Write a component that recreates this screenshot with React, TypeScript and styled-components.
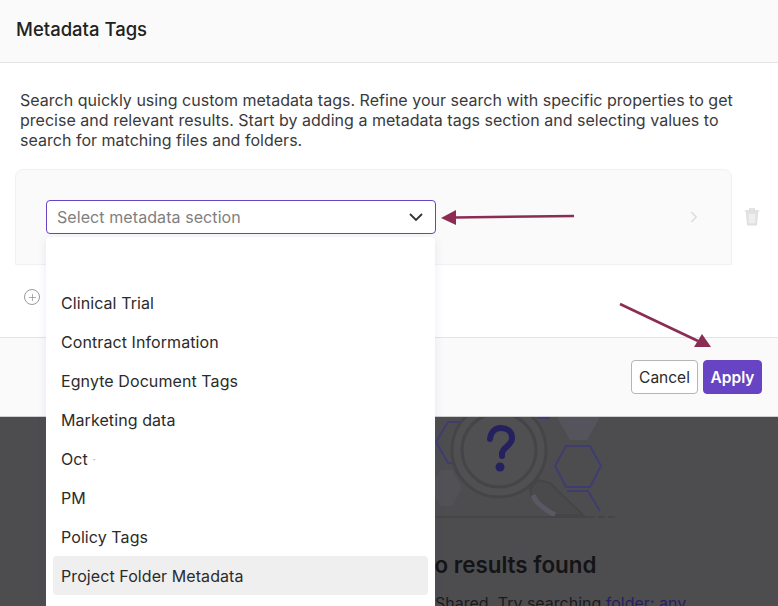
import styled, { createGlobalStyle } from "styled-components";
import { ChevronRight, Plus } from "lucide-react";

const GlobalStyle = createGlobalStyle`
  html, body {
    margin : 0;
    padding : 0;
    background : #4d4d4f;
  }
  * {
    box-sizing : border-box;
  }
`;

const Page = styled.div`
  position : relative;
  width : 778px;
  height : 606px;
  overflow : hidden;
  display : flex;
  flex-direction : column;
  font-family : Inter, "Liberation Sans", sans-serif;
  color : #2b2b2b;
`;

const Header = styled.header`
  height : 63px;
  flex : none;
  display : flex;
  align-items : center;
  padding : 0 16px 5px;
  background : #fafafa;
  border-bottom : 1px solid #e3e3e3;
`;

const Title = styled.h1`
  margin : 0;
  font-size : 18.5px;
  font-weight : 500;
  color : #222;
`;

const Body = styled.section`
  height : 274px;
  flex : none;
  background : #fff;
  padding : 27px 15px 0;
`;

const Intro = styled.p`
  margin : 0 0 19px 5px;
  font-size : 16px;
  line-height : 20px;
  letter-spacing : 0.02px;
  color : #3a3a3a;
`;

const SectionRow = styled.div`
  display : flex;
  align-items : center;
`;

const SectionCard = styled.div`
  width : 717px;
  height : 96px;
  display : flex;
  align-items : center;
  justify-content : space-between;
  padding : 0 28px 0 30px;
  background : #fafafa;
  border : 1px solid #f1f1f1;
  border-radius : 8px 8px 0 0;
`;

const Select = styled.div`
  width : 390px;
  height : 34px;
  display : flex;
  align-items : center;
  justify-content : space-between;
  padding : 0 12px 0 10px;
  background : #fff;
  border : 1.5px solid #6744c4;
  border-radius : 4px;
  font-size : 16px;
  letter-spacing : 0.08px;
  color : #808080;
`;

const DeleteButton = styled.span`
  display : flex;
  margin-left : 13px;
`;

const AddRow = styled.div`
  display : flex;
  margin : 24px 0 0 9px;
`;

const AddIcon = styled.span`
  width : 16px;
  height : 16px;
  display : flex;
  align-items : center;
  justify-content : center;
  border : 1px solid #9a9a9a;
  border-radius : 50%;
  color : #8a8a8a;
`;

const Footer = styled.footer`
  height : 80px;
  flex : none;
  display : flex;
  align-items : center;
  justify-content : flex-end;
  gap : 5px;
  padding : 0 16px 0 0;
  background : #fafafa;
  border-top : 1px solid #e3e3e3;
  border-bottom : 1px solid #cfcfcf;
`;

const Button = styled.button<{ $primary?: boolean }>`
  height : 34px;
  padding : 0;
  width : ${props => (props.$primary ? "59px" : "67px")};
  font-family : inherit;
  font-size : 15.5px;
  font-weight : ${props => (props.$primary ? 600 : 400)};
  color : ${props => (props.$primary ? "#fff" : "#2b2b2b")};
  background : ${props => (props.$primary ? "#6744c4" : "#fff")};
  border : 1px solid ${props => (props.$primary ? "#6744c4" : "#b5b5b5")};
  border-radius : 4px;
`;

const Backdrop = styled.div`
  flex : 1;
  background : #4d4d4f;
  display : flex;
  flex-direction : column;
  align-items : flex-start;
  padding-left : 400px;
  overflow : hidden;
`;

const Illustration = styled.svg`
  flex : none;
  display : block;
`;

const EmptyTitle = styled.div`
  width : 214px;
  margin-top : 33px;
  text-align : center;
  font-size : 22.4px;
  font-weight : 600;
  white-space : nowrap;
  color : #141416;
`;

const EmptyText = styled.div`
  margin : 15px 0 0 35px;
  font-size : 16px;
  white-space : nowrap;
  color : #1b1b1d;
`;

const EmptyLink = styled.span`
  color : #25215e;
`;

const Dropdown = styled.ul`
  position : absolute;
  left : 46px;
  top : 237px;
  width : 389px;
  height : 380px;
  margin : 0;
  padding : 8px 7px;
  list-style : none;
  background : #fff;
  border-radius : 4px;
  box-shadow : 0 2px 10px rgba(90, 70, 170, 0.12);
`;

const Option = styled.li<{ $active?: boolean }>`
  height : 38.9px;
  display : flex;
  align-items : center;
  padding-left : 8px;
  font-size : 16px;
  letter-spacing : 0.08px;
  color : #2b2b2b;
  border-radius : 4px;
  background : ${props => (props.$active ? "#efefef" : "transparent")};
`;

const FaintDot = styled.span`
  margin-left : 5px;
  font-size : 10px;
  color : #a0a0a0;
`;

const Annotations = styled.svg`
  position : absolute;
  left : 0;
  top : 0;
  pointer-events : none;
`;

const options = [
  "",
  "Clinical Trial",
  "Contract Information",
  "Egnyte Document Tags",
  "Marketing data",
  "Oct",
  "PM",
  "Policy Tags",
  "Project Folder Metadata",
];

export default function App() {
  return (
    <Page>
      <GlobalStyle />
      <Header>
        <Title>Metadata Tags</Title>
      </Header>
      <Body>
        <Intro>
          Search quickly using custom metadata tags. Refine your search with specific properties to get
          precise and relevant results. Start by adding a metadata tags section and selecting values to
          search for matching files and folders.
        </Intro>
        <SectionRow>
          <SectionCard>
            <Select>
              Select metadata section
              <svg width="14" height="9" viewBox="0 0 14 9" fill="none">
                <path d="M1 1l6 6 6-6" stroke="#333" strokeWidth="1.8" />
              </svg>
            </Select>
            <ChevronRight size={18} color="#dcdcdc" />
          </SectionCard>
          <DeleteButton>
            <svg width="14" height="18" viewBox="0 0 14 18" fill="none" stroke="#dcdcdc">
              <path d="M0 3h14M5 3V1h4v2" strokeWidth="1.6" />
              <path d="M1.5 4l1 13h9l1-13z" fill="#e4e4e4" strokeWidth="1" />
              <path d="M5 6v9M7 6v9M9 6v9" stroke="#fafafa" strokeWidth="0.9" />
            </svg>
          </DeleteButton>
        </SectionRow>
        <AddRow>
          <AddIcon>
            <Plus size={11} strokeWidth={1.5} />
          </AddIcon>
        </AddRow>
      </Body>
      <Footer>
        <Button>Cancel</Button>
        <Button $primary>Apply</Button>
      </Footer>
      <Backdrop>
        <Illustration width="230" height="101" viewBox="0 0 230 101" fill="none">
          <path d="M157 0l13 23h17l13-23z" fill="#55545d" />
          <path d="M40 53l12 0 10 18-10 18h-12l-10-18z" fill="#525156" />
          <path d="M137 0h13v2h-13z" fill="#3f3d70" />
          <path d="M60 5H48L36 25 48 46H55" stroke="#3f3d70" strokeWidth="2" />
          <path d="M155 49l11-20h24l11 20-11 21h-24z" stroke="#3f3d70" strokeWidth="2" />
          <path d="M167 74h21l12 20" stroke="#3f3d70" strokeWidth="2" />
          <circle cx="99" cy="33" r="47" fill="#505052" stroke="#454547" strokeWidth="3" />
          <circle cx="99" cy="33" r="37" stroke="#454547" strokeWidth="3" />
          <path d="M130 72l8-9 12 3 33 32h-28l-23-18z" fill="#4a4a4c" stroke="#454547" strokeWidth="2" />
          <path d="M133 78c2 7 9 13 22 20" stroke="#5a5862" strokeWidth="5" />
          <path d="M0 100H195" stroke="#454547" strokeWidth="2" />
          <path d="M198 100h20" stroke="#454547" strokeWidth="2" strokeDasharray="7 3" />
          <path
            d="M90 22c1-8 6-11 11-11 7 0 11 4 11 10 0 8-10 9-10 16v2"
            stroke="#25215e"
            strokeWidth="6"
            strokeLinecap="round"
          />
          <circle cx="100" cy="50" r="4.5" fill="#25215e" />
        </Illustration>
        <EmptyTitle>No results found</EmptyTitle>
        <EmptyText>
          Shared. Try searching <EmptyLink>folder: any</EmptyLink>
        </EmptyText>
      </Backdrop>
      <Dropdown>
        {options.map((name, i) => (
          <Option key={i} $active={name === "Project Folder Metadata"}>
            {name}
            {name === "Oct" && <FaintDot>·</FaintDot>}
          </Option>
        ))}
      </Dropdown>
      <Annotations width="778" height="606" viewBox="0 0 778 606" fill="none">
        <path d="M574 216L455 217.5" stroke="#8b2c52" strokeWidth="2.5" />
        <path d="M441 218L456 210V225Z" fill="#8b2c52" />
        <path d="M620 304L698 341" stroke="#8b2c52" strokeWidth="2.5" />
        <path d="M711 347L694 347L702 334Z" fill="#8b2c52" />
      </Annotations>
    </Page>
  );
}
